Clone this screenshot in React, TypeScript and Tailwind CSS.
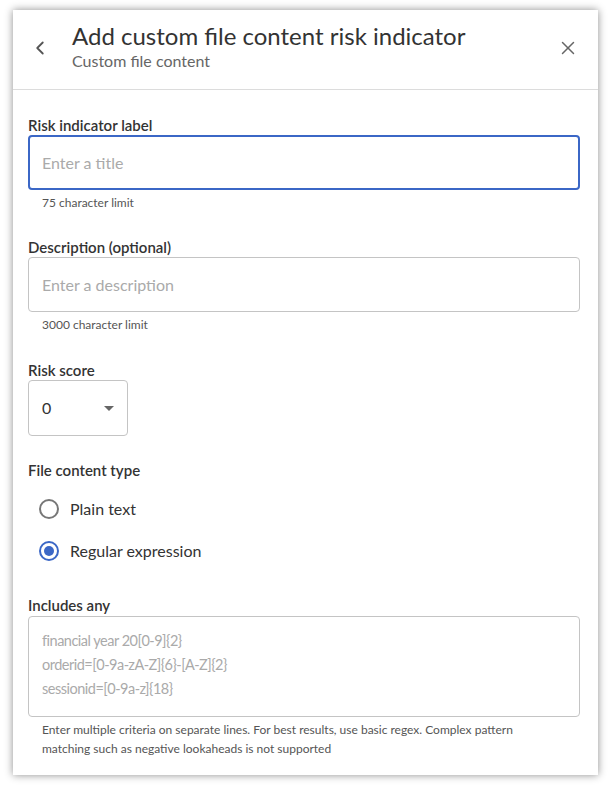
import { X, ChevronLeft } from "lucide-react";

function Label({ children }: { children: React.ReactNode }) {
  return <p className="text-[15px] font-semibold leading-[20px] text-[#333]">{children}</p>;
}

function Helper({ children }: { children: React.ReactNode }) {
  return <p className="mt-[3px] max-w-[504px] pl-[14px] text-[12px] leading-[19px] text-[#555]">{children}</p>;
}

function Radio({ checked, label }: { checked?: boolean; label: string }) {
  return (
    <div className="flex h-[42px] items-center gap-[11px] pl-[11px]">
      <span
        className={`flex h-[20px] w-[20px] items-center justify-center rounded-full border-2 ${
          checked ? "border-[#3b67c6]" : "border-[#777]"
        }`}
      >
        {checked && <span className="h-[10px] w-[10px] rounded-full bg-[#3b67c6]" />}
      </span>
      <span className="text-[16px] text-[#333]">{label}</span>
    </div>
  );
}

export default function App() {
  return (
    <div className="min-h-screen bg-white p-[10px_14px_9px_13px]" style={{ fontFamily: "Lato, 'Open Sans', sans-serif" }}>
      <div className="w-[585px] bg-white shadow-[0_0_8px_rgba(0,0,0,0.45)]">
        <div className="flex h-[80px] items-start border-b border-[#dcdcdc] pt-[12px]">
          <div className="flex w-[59px] justify-center pt-[15px] pr-[5px]">
            <ChevronLeft size={22} strokeWidth={2} className="text-[#555]" />
          </div>
          <div className="flex-1">
            <h1 className="text-[24px] leading-[28px] text-[#333]">Add custom file content risk indicator</h1>
            <p className="mt-[1px] text-[16px] leading-[20px] text-[#666]">Custom file content</p>
          </div>
          <div className="pr-[19px] pt-[15px]">
            <X size={22} strokeWidth={1.6} className="text-[#666]" />
          </div>
        </div>

        <div className="px-[15px] pt-[25px] pb-[17px] pr-[18px]">
          <Label>Risk indicator label</Label>
          <div className="flex h-[55px] items-center rounded-[4px] border-2 border-[#3b67c6] px-[12px] text-[16px] text-[#aaa]">
            Enter a title
          </div>
          <Helper>75 character limit</Helper>

          <div className="mt-[25px]">
            <Label>Description (optional)</Label>
            <div className="flex h-[55px] items-center rounded-[4px] border border-[#c4c4c4] px-[13px] text-[16px] text-[#aaa]">
              Enter a description
            </div>
            <Helper>3000 character limit</Helper>
          </div>

          <div className="mt-[26px]">
            <Label>Risk score</Label>
            <div className="flex h-[56px] w-[100px] items-center justify-between rounded-[4px] border border-[#c4c4c4] pl-[13px] pr-[13px] text-[16px] text-[#333]">
              <span>0</span>
              <svg width="10" height="5" viewBox="0 0 10 5">
                <path d="M0 0 L10 0 L5 5 Z" fill="#666" />
              </svg>
            </div>
          </div>

          <div className="mt-[24px]">
            <Label>File content type</Label>
            <div className="mt-[8px]">
              <Radio label="Plain text" />
              <Radio checked label="Regular expression" />
            </div>
          </div>

          <div className="mt-[23px]">
            <Label>Includes any</Label>
            <div className="mt-[1px] h-[101px] rounded-[4px] border border-[#c4c4c4] px-[13px] pt-[12px] text-[14.5px] leading-[24px] tracking-[-0.5px] text-[#aaa]">
              <p>financial year 20[0-9]{"{2}"}</p>
              <p>orderid=[0-9a-zA-Z]{"{6}"}-[A-Z]{"{2}"}</p>
              <p>sessionid=[0-9a-z]{"{18}"}</p>
            </div>
            <Helper>
              Enter multiple criteria on separate lines. For best results, use basic regex. Complex pattern matching such as negative lookaheads is not supported
            </Helper>
          </div>
        </div>
      </div>
    </div>
  );
}
